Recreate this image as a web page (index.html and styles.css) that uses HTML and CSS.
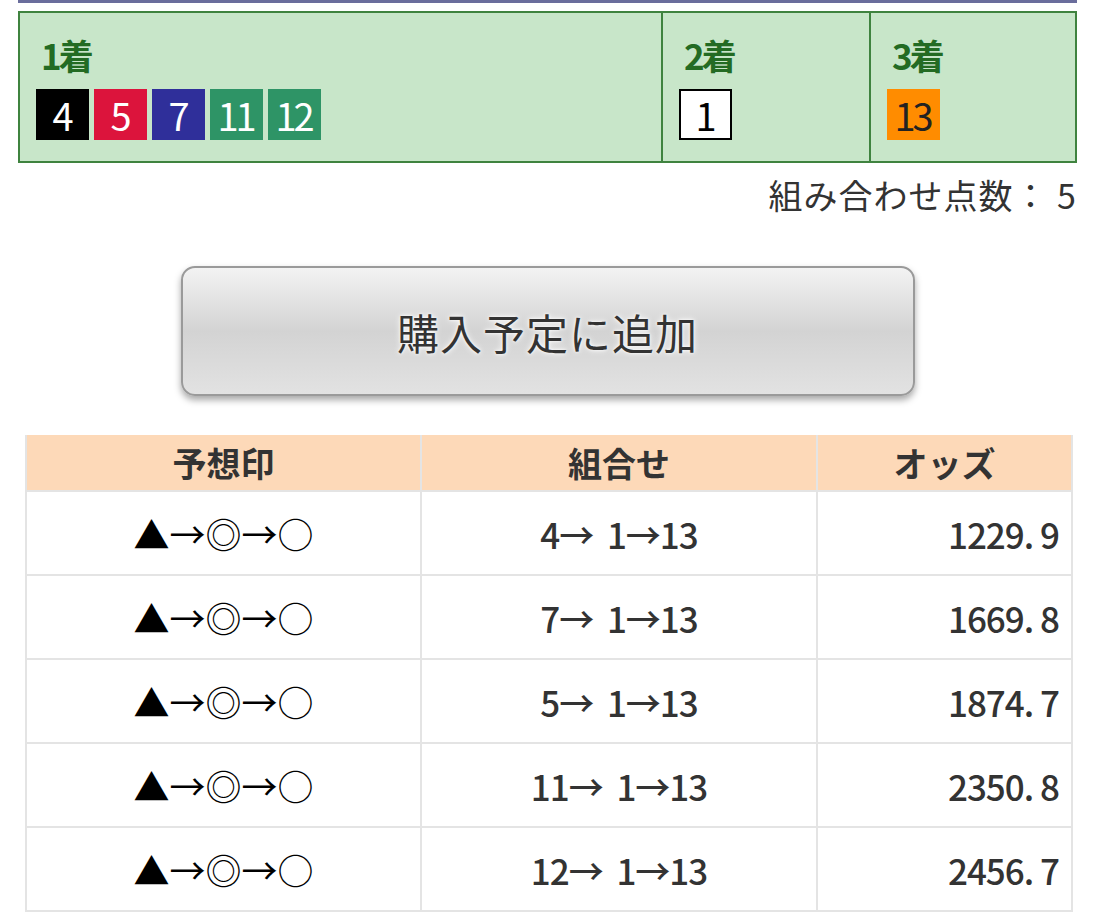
FILE: index.html
```html
<!DOCTYPE html>
<html lang="ja">
<head>
    <meta charset="UTF-8">
    <meta name="viewport" content="width=device-width, initial-scale=1.0">
    <title>買い目確認</title>
    <link rel="stylesheet" href="styles.css">
</head>
<body>

    <div class="page">
        <div class="top-line"></div>

        <!-- 選択した馬番 -->
        <div class="picks">
            <div class="pick pick-first">
                <div class="pick-label">1着</div>
                <div class="nums">
                    <span class="num c-black">4</span>
                    <span class="num c-red">5</span>
                    <span class="num c-blue">7</span>
                    <span class="num c-green">11</span>
                    <span class="num c-green">12</span>
                </div>
            </div>
            <div class="pick pick-second">
                <div class="pick-label">2着</div>
                <div class="nums">
                    <span class="num c-white">1</span>
                </div>
            </div>
            <div class="pick pick-third">
                <div class="pick-label">3着</div>
                <div class="nums">
                    <span class="num c-orange">13</span>
                </div>
            </div>
        </div>

        <p class="count">組み合わせ点数： 5</p>

        <div class="btn-wrap">
            <button class="add-btn" type="button">購入予定に追加</button>
        </div>

        <!-- 組み合わせ一覧 -->
        <table class="combo-table">
            <colgroup>
                <col class="w-mark">
                <col class="w-combo">
                <col class="w-odds">
            </colgroup>
            <thead>
                <tr>
                    <th>予想印</th>
                    <th>組合せ</th>
                    <th>オッズ</th>
                </tr>
            </thead>
            <tbody>
                <tr>
                    <td class="col-mark">▲→◎→○</td>
                    <td class="col-combo">4→  1→13</td>
                    <td class="col-odds">1229. 9</td>
                </tr>
                <tr>
                    <td class="col-mark">▲→◎→○</td>
                    <td class="col-combo">7→  1→13</td>
                    <td class="col-odds">1669. 8</td>
                </tr>
                <tr>
                    <td class="col-mark">▲→◎→○</td>
                    <td class="col-combo">5→  1→13</td>
                    <td class="col-odds">1874. 7</td>
                </tr>
                <tr>
                    <td class="col-mark">▲→◎→○</td>
                    <td class="col-combo">11→  1→13</td>
                    <td class="col-odds">2350. 8</td>
                </tr>
                <tr>
                    <td class="col-mark">▲→◎→○</td>
                    <td class="col-combo">12→  1→13</td>
                    <td class="col-odds">2456. 7</td>
                </tr>
            </tbody>
        </table>
    </div>

</body>
</html>
```

FILE: styles.css
```css
body {
    margin: 0;
    padding: 0;
    background: #fff;
    font-family: "Noto Sans CJK JP", "Noto Sans", sans-serif;
    color: #333;
}

.page {
    width: 1059px;
    margin-left: 18px;
}

.top-line {
    height: 3px;
    background-color: #6a6d9c;
    margin-bottom: 8px;
}

/* picks box */
.picks {
    display: flex;
    background-color: #c8e6c9;
    border: 2px solid #3f833f;
    height: 152px;
    box-sizing: border-box;
}

.pick {
    padding: 19px 0 0 16px;
    box-sizing: border-box;
}

.pick-first {
    width: 643px;
    border-right: 2px solid #3f833f;
}

.pick-second {
    width: 208px;
    border-right: 2px solid #3f833f;
}

.pick-third {
    flex: 1;
}

.pick-label {
    color: #236b23;
    font-size: 35px;
    font-weight: bold;
    line-height: 46px;
    letter-spacing: -3px;
    padding-left: 5px;
}

.nums {
    display: flex;
    gap: 5px;
    margin-top: 11px;
}

.num {
    display: flex;
    align-items: center;
    justify-content: center;
    width: 53px;
    height: 51px;
    box-sizing: border-box;
    font-size: 38px;
    line-height: 1;
    color: #fff;
    letter-spacing: -3px;
    padding-right: 2px;
}

.c-black { background-color: #000; }
.c-red { background-color: #dc143c; }
.c-blue { background-color: #2f2f9a; }
.c-green { background-color: #2e9466; }
.c-white { background-color: #fff; color: #000; border: 2px solid #000; }
.c-orange { background-color: #ff8c00; color: #222; }

.count {
    margin: 8px 0 0;
    text-align: right;
    font-size: 34px;
    line-height: 48px;
    letter-spacing: 1px;
    color: #333;
    white-space: pre;
}

/* button */
.btn-wrap {
    display: flex;
    justify-content: center;
    margin-top: 47px;
}

.add-btn {
    width: 734px;
    height: 130px;
    border: 2px solid #9a9a9a;
    border-radius: 14px;
    background: linear-gradient(#f3f3f3, #d3d3d3 50%, #e2e2e2);
    box-shadow: 0 4px 7px rgba(0, 0, 0, 0.35);
    font-family: "Noto Sans CJK JP", sans-serif;
    font-size: 42px;
    letter-spacing: 1px;
    color: #333;
    text-shadow: 0 0 6px #fff, 0 0 3px #fff;
    cursor: pointer;
}

/* table */
.combo-table {
    width: 1046px;
    margin: 39px 0 0 7px;
    border-collapse: collapse;
    table-layout: fixed;
}

.w-mark { width: 395px; }
.w-combo { width: 396px; }
.w-odds { width: 255px; }

.combo-table th,
.combo-table td {
    border: 2px solid #e4e4e4;
    color: #333;
}

.combo-table th {
    background-color: #fdd9b8;
    height: 55px;
    padding: 0;
    font-size: 34px;
    font-weight: bold;
    border-top: 0;
}

.combo-table td {
    height: 82px;
    padding: 0 12px;
    font-size: 35px;
    font-weight: 500;
}

.col-mark {
    text-align: center;
}

.col-combo {
    text-align: center;
    white-space: pre;
    letter-spacing: -1px;
}

.col-odds {
    text-align: right;
    letter-spacing: -1px;
}

td.col-mark {
    color: #000;
    font-weight: normal;
    font-size: 36px;
}
```
